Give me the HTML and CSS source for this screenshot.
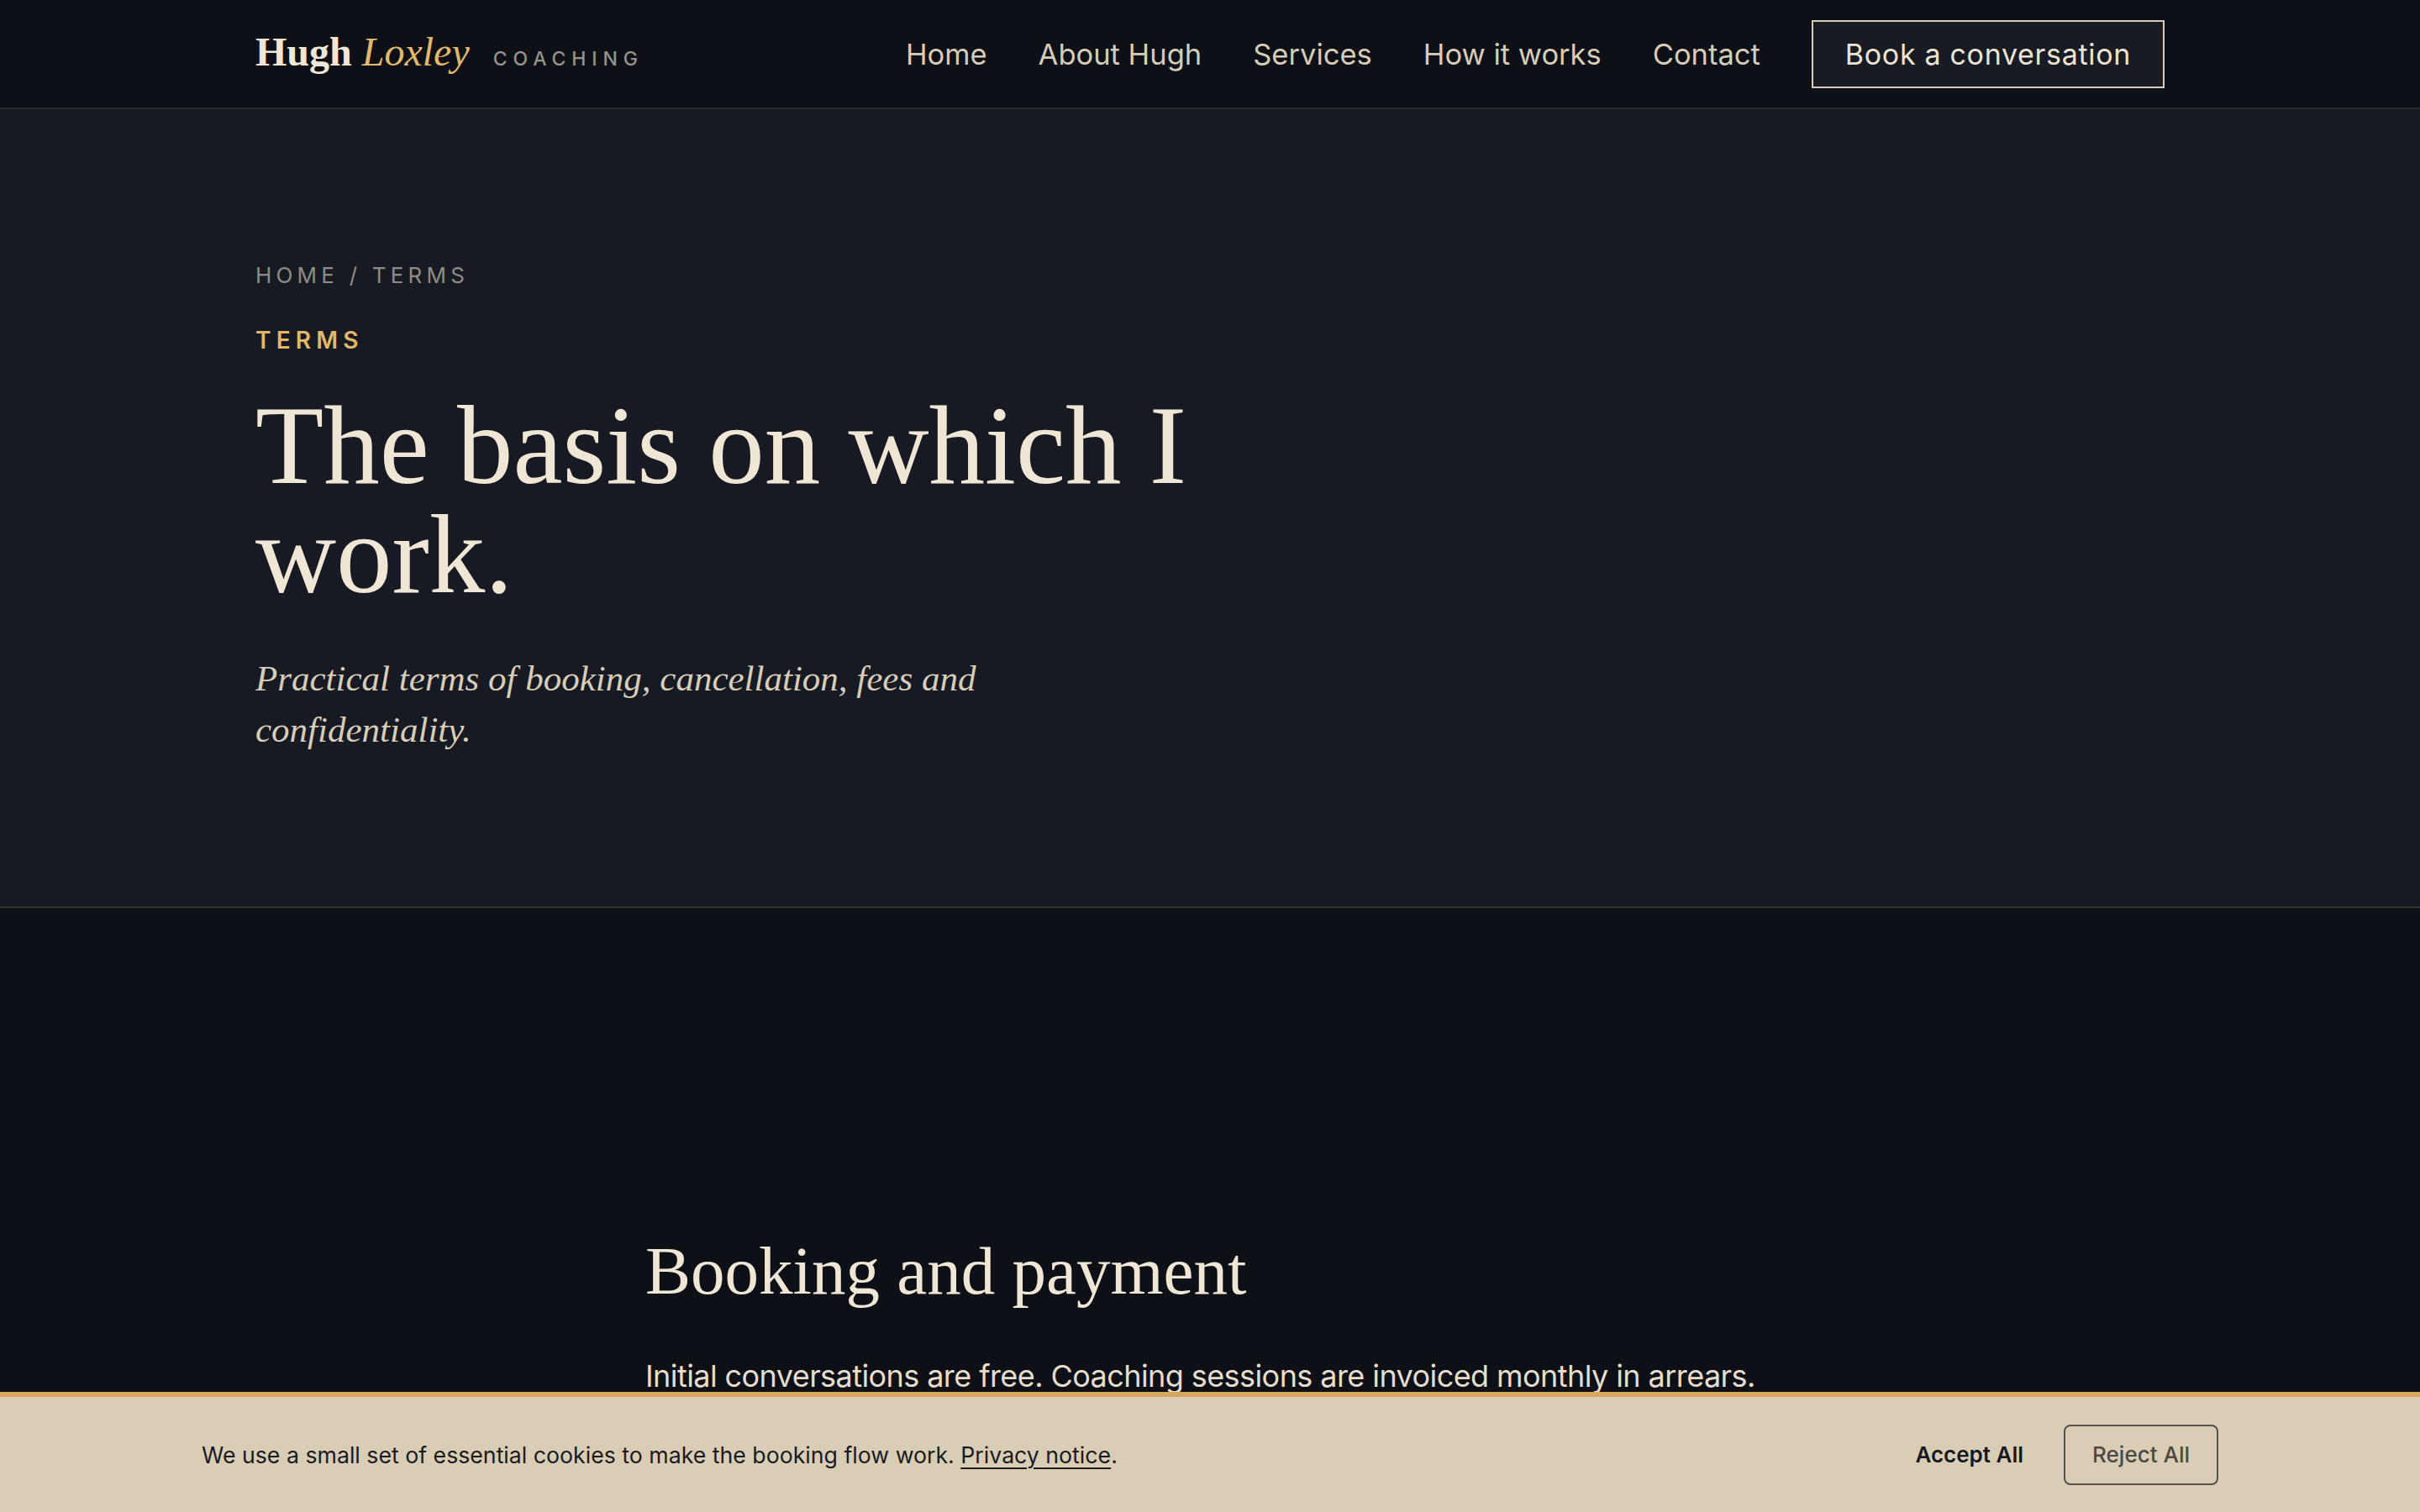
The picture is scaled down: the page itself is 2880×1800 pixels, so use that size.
FILE: index.html
```html
<!DOCTYPE html>
<html lang="en">
<head>
<meta charset="utf-8">
<title>Terms — Hugh Loxley Coaching</title>
<link rel="stylesheet" href="styles.css">
</head>
<body>
<header class="site-header">
  <div class="wrap header-inner">
    <a class="brand" href="#">
      <span class="brand-name"><span class="brand-first">Hugh</span> <span class="brand-last">Loxley</span></span>
      <span class="brand-tag">COACHING</span>
    </a>
    <nav class="main-nav">
      <a href="#">Home</a>
      <a href="#">About Hugh</a>
      <a href="#">Services</a>
      <a href="#">How it works</a>
      <a href="#">Contact</a>
      <a href="#" class="btn-outline">Book a conversation</a>
    </nav>
  </div>
</header>

<section class="hero">
  <div class="wrap">
    <p class="breadcrumb"><a href="#">HOME</a> <span class="sep">/</span> <span>TERMS</span></p>
    <p class="eyebrow">TERMS</p>
    <h1 class="hero-title">The basis on which I work.</h1>
    <p class="hero-lede">Practical terms of booking, cancellation, fees and confidentiality.</p>
  </div>
</section>

<main class="content">
  <article class="prose">
    <h2>Booking and payment</h2>
    <p>Initial conversations are free. Coaching sessions are invoiced monthly in arrears.</p>
    <p>Invoices are payable within fourteen days by bank transfer.</p>
    <h2>Cancellation</h2>
    <p>Sessions cancelled with less than 48 hours’ notice are charged in full.</p>
    <h2>Confidentiality</h2>
    <p>What you share in sessions stays between us, except where the law requires otherwise.</p>
  </article>
</main>

<div class="cookie-bar">
  <p class="cookie-text">We use a small set of essential cookies to make the booking flow work. <a href="#">Privacy notice</a>.</p>
  <div class="cookie-actions">
    <button class="cookie-btn cookie-accept">Accept All</button>
    <button class="cookie-btn cookie-reject">Reject All</button>
  </div>
</div>
</body>
</html>
```
FILE: styles.css
```css
* { box-sizing: border-box; }
html, body { margin: 0; padding: 0; }
body {
  background: #0d1016;
  color: #e9e1d2;
  font-family: Inter, "Liberation Sans", sans-serif;
}
a { color: inherit; text-decoration: none; }
p, h1, h2 { margin: 0; }

.wrap {
  max-width: 2400px;
  margin: 0 auto;
  padding: 0 64px;
}

/* Header */
.site-header {
  background: #0d1016;
  border-bottom: 2px solid #2d2921;
}
.header-inner {
  height: 128px;
  display: flex;
  align-items: center;
  justify-content: space-between;
}
.brand {
  display: flex;
  align-items: baseline;
  gap: 28px;
  margin-top: -6px;
}
.brand-name {
  font-family: "Liberation Serif", "Times New Roman", serif;
  font-size: 48px;
  color: #efe6d6;
}
.brand-first { font-weight: 700; }
.brand-last { font-style: italic; color: #e2b96c; }
.brand-tag {
  font-size: 23px;
  letter-spacing: 0.3em;
  color: #96938a;
  font-weight: 500;
}
.main-nav {
  display: flex;
  align-items: center;
  gap: 61px;
  font-size: 34.5px;
  color: #d6ccb7;
}
.btn-outline {
  display: flex;
  align-items: center;
  height: 81px;
  padding: 0 38px;
  border: 2px solid #d9cdb5;
  background: #181b24;
  color: #ece3d2;
  font-size: 34px;
  letter-spacing: 0.02em;
}

/* Hero */
.hero {
  background: #171a23;
  border-bottom: 2px solid #3a342b;
  padding: 178px 0 180px;
}
.breadcrumb {
  font-size: 26px;
  line-height: 40px;
  letter-spacing: 0.2em;
  color: #8e8c86;
}
.eyebrow {
  margin-top: 37px;
  font-size: 28px;
  line-height: 40px;
  letter-spacing: 0.22em;
  font-weight: 600;
  color: #e2b868;
}
.hero-title {
  margin-top: 40px;
  max-width: 1320px;
  font-family: "Liberation Serif", "Times New Roman", serif;
  font-weight: 400;
  font-size: 133px;
  line-height: 130px;
  color: #efe6d6;
}
.hero-lede {
  margin-top: 52px;
  max-width: 1040px;
  font-family: "Liberation Serif", "Times New Roman", serif;
  font-style: italic;
  font-size: 43px;
  line-height: 61px;
  color: #d7cdb8;
}

/* Content */
.content {
  padding: 382px 0 400px;
}
.prose {
  max-width: 1344px;
  margin: 0 auto;
}
.prose h2 {
  font-family: "Liberation Serif", "Times New Roman", serif;
  font-weight: 400;
  font-size: 81px;
  line-height: 1.25;
  color: #efe6d6;
}
.prose h2 + p { margin-top: 46px; }
.prose p {
  font-size: 36px;
  line-height: 1.6;
  color: #e6ddcc;
  letter-spacing: -0.016em;
}
.prose p + h2 { margin-top: 120px; }
.prose p + p { margin-top: 30px; }

/* Cookie bar */
.cookie-bar {
  position: fixed;
  left: 0;
  right: 0;
  bottom: 0;
  height: 143px;
  background: #d9cdb5;
  border-top: 6px solid #d6a65b;
  padding: 0 240px;
  display: flex;
  align-items: center;
  justify-content: space-between;
}
.cookie-text {
  font-size: 26.7px;
  color: #1a1b1e;
}
.cookie-text a {
  text-decoration: underline;
  text-underline-offset: 5px;
  text-decoration-thickness: 2px;
}
.cookie-actions {
  display: flex;
  align-items: center;
  gap: 16px;
}
.cookie-btn {
  font-family: Inter, "Liberation Sans", sans-serif;
  font-size: 26px;
  height: 72px;
  padding: 0 32px;
  background: transparent;
  border: 2px solid transparent;
  border-radius: 8px;
  cursor: pointer;
}
.cookie-accept {
  font-weight: 600;
  color: #16181c;
  padding-right: 30px;
}
.cookie-reject {
  font-weight: 500;
  color: #4d4940;
  border-color: #55514a;
}
```
